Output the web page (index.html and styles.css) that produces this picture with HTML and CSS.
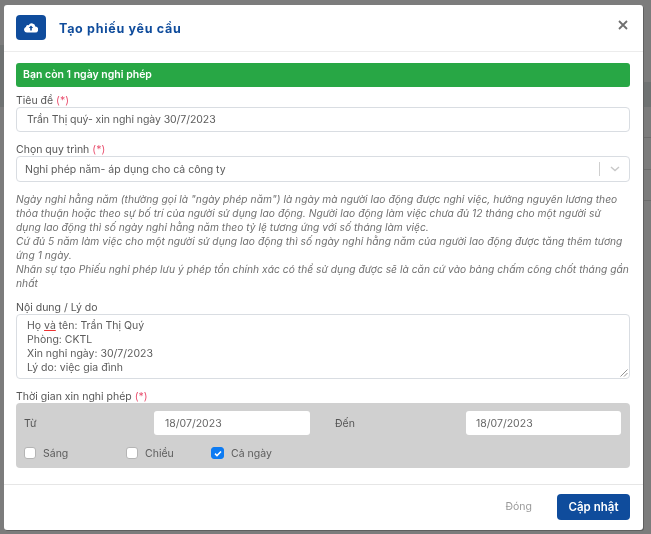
FILE: index.html
```html
<!DOCTYPE html>
<html lang="vi">
<head>
<meta charset="utf-8">
<title>Tạo phiếu yêu cầu</title>
<link rel="stylesheet" href="styles.css">
</head>
<body>
<div class="backdrop">
  <span class="bg-band bg-right-a"></span>
  <span class="bg-line bg-right-b"></span>
  <span class="bg-line bg-right-c"></span>
  <span class="bg-line bg-right-d"></span>
  <span class="bg-band bg-left-a"></span>
  <section class="modal">
    <header class="modal-header">
      <div class="header-icon">
        <svg width="14" height="11" viewBox="0 0 14 11"><path fill="#fff" d="M11.3 4.6A3.5 3.5 0 0 0 4.7 3.2 2.2 2.2 0 0 0 1.9 5 2.9 2.9 0 0 0 3 10.6h8a3 3 0 0 0 .3-6z"/><path fill="#0f4c9c" d="M7 3.6 9.2 6H7.8v2.6H6.2V6H4.8z"/></svg>
      </div>
      <h1 class="modal-title">Tạo phiếu yêu cầu</h1>
      <span class="close">
        <svg width="10" height="10" viewBox="0 0 10 10"><path d="M1 1l8 8M9 1l-8 8" stroke="#6f6f6f" stroke-width="1.8" fill="none"/></svg>
      </span>
    </header>
    <div class="modal-body">
      <div class="alert">Bạn còn 1 ngày nghỉ phép</div>
      <label class="label label-first">Tiêu đề <em>(*)</em></label>
      <div class="field field-title">Trần Thị quý- xin nghỉ ngày 30/7/2023</div>
      <label class="label label-gap">Chọn quy trình <em>(*)</em></label>
      <div class="field field-select">
        <span class="select-value">Nghỉ phép năm- áp dụng cho cả công ty</span>
        <span class="select-sep"></span>
        <span class="select-arrow">
          <svg width="10" height="6" viewBox="0 0 10 6"><path d="M1 1l4 3.6L9 1" stroke="#c8c8c8" stroke-width="1.4" fill="none"/></svg>
        </span>
      </div>
      <p class="help">Ngày nghỉ hằng năm (thường gọi là "ngày phép năm") là ngày mà người lao động được nghỉ việc, hưởng nguyên lương theo<br>thỏa thuận hoặc theo sự bố trí của người sử dụng lao động. Người lao động làm việc chưa đủ 12 tháng cho một người sử<br>dụng lao động thì số ngày nghỉ hằng năm theo tỷ lệ tương ứng với số tháng làm việc.<br>Cứ đủ 5 năm làm việc cho một người sử dụng lao động thì số ngày nghỉ hằng năm của người lao động được tăng thêm tương<br>ứng 1 ngày.<br>Nhân sự tạo Phiếu nghỉ phép lưu ý phép tồn chính xác có thể sử dụng được sẽ là căn cứ vào bảng chấm công chốt tháng gần<br>nhất</p>
      <label class="label label-reason">Nội dung / Lý do</label>
      <div class="field field-area">
        Họ <span class="spell">và</span> tên: Trần Thị Quý<br>Phòng: CKTL<br>Xin nghỉ ngày: 30/7/2023<br>Lý do: việc gia đình
        <svg class="grip" width="8" height="8" viewBox="0 0 8 8"><path d="M7.5 .5l-7 7M7.5 4l-3.5 3.5" stroke="#777" stroke-width=".8" fill="none"/></svg>
      </div>
      <label class="label label-time">Thời gian xin nghỉ phép <em>(*)</em></label>
      <div class="panel">
        <div class="date-row">
          <span class="date-label">Từ</span>
          <span class="date-input date-from">18/07/2023</span>
          <span class="date-label date-label-to">Đến</span>
          <span class="date-input date-to">18/07/2023</span>
        </div>
        <div class="check-row">
          <span class="check check-a"><i class="box"></i>Sáng</span>
          <span class="check check-b"><i class="box"></i>Chiều</span>
          <span class="check"><i class="box box-on"><svg width="8" height="7" viewBox="0 0 8 7"><path d="M1 3.6l2 2 4-4.2" stroke="#fff" stroke-width="1.5" fill="none"/></svg></i>Cả ngày</span>
        </div>
      </div>
    </div>
    <footer class="modal-footer">
      <span class="btn-close">Đóng</span>
      <span class="btn-save">Cập nhật</span>
    </footer>
  </section>
</div>
</body>
</html>
```
FILE: styles.css
```css
* { box-sizing: border-box; }
html, body { margin: 0; height: 100%; }
body { font-family: Inter, "Noto Sans", sans-serif; font-size: 10.5px; color: #555; overflow: hidden; }
.backdrop { position: relative; width: 651px; height: 534px; background: #7c7c7c; padding: 5px 8px 4px 4px; filter: blur(.35px); }
.bg-band { position: absolute; background: #6f7272; }
.bg-line { position: absolute; right: 0; width: 7px; height: 1px; background: #6c6c6c; }
.bg-right-a { right: 0; top: 82px; width: 7px; height: 25px; }
.bg-right-b { top: 137px; }
.bg-right-c { top: 169px; }
.bg-right-d { top: 200px; }
.bg-left-a { left: 0; top: 45px; width: 4px; height: 62px; }
.modal { position: relative; width: 639px; height: 525px; background: #fff; border-radius: 3px; display: flex; flex-direction: column; box-shadow: 1px 1px 0 #5f5f5f; }
.modal-header { height: 47px; flex: none; display: flex; align-items: center; padding: 0 12px; border-bottom: 1px solid #ececec; }
.header-icon { width: 30px; height: 25px; margin-top: -1px; border-radius: 4px; background: #0f4c9c; display: flex; align-items: center; justify-content: center; }
.modal-title { margin: 0 0 0 13px; font-size: 12.5px; font-weight: 700; color: #0f4c9c; letter-spacing: .7px; flex: 1; }
.close { display: flex; margin: -7px 3px 0 0; }
.modal-body { flex: none; padding: 11px 13px 0 12px; }
.alert { height: 24px; background: #28a745; color: #fff; border-radius: 3px; padding: 0 7px; font-size: 10.5px; font-weight: 600; line-height: 24px; }
.label { display: block; height: 13px; line-height: 13px; font-size: 10.5px; color: #555; }
.label em { font-style: normal; color: #e9506f; }
.label-first { margin-top: 7px; }
.label-gap { margin-top: 11px; }
.label-reason { margin-top: 11px; }
.label-time { margin-top: 11px; }
.field { border: 1px solid #d9dde2; border-radius: 4px; background: #fff; font-size: 10.5px; color: #5b5b5b; }
.field-title { height: 25px; line-height: 23px; padding: 0 10px; letter-spacing: -.07px; }
.field-select { height: 26px; display: flex; align-items: center; padding-left: 8px; }
.select-value { flex: 1; }
.select-sep { width: 1px; height: 14px; background: #cfcfcf; }
.select-arrow { width: 29px; display: flex; justify-content: center; }
.help { margin: 10px 0 0; font-size: 10.25px; line-height: 14px; font-style: italic; color: #707070; letter-spacing: .02px; white-space: nowrap; }
.field-area { position: relative; height: 65px; padding: 4px 10px; line-height: 14px; }
.spell { text-decoration: underline #e33 1px; text-underline-offset: 1px; }
.grip { position: absolute; right: 1px; bottom: 1px; }
.panel { height: 65px; background: #d0d0d0; border-radius: 4px; padding: 8px 9px 0 8px; }
.date-row { display: flex; align-items: center; height: 24px; }
.date-label { font-size: 10.5px; width: 130px; color: #555; }
.date-label-to { width: 131px; margin-left: 25px; }
.date-input { width: 156px; height: 24px; background: #fff; border-radius: 3px; padding: 0 11px; line-height: 25px; font-size: 10.5px; color: #666; }
.date-to { width: 155px; padding: 0 10px; }
.check-row { display: flex; align-items: center; height: 16px; margin-top: 10px; }
.check { display: flex; align-items: center; gap: 7px; font-size: 10.5px; color: #5c5c5c; }
.check-a { width: 102px; }
.check-b { width: 85px; }
.box { width: 12px; height: 12px; border: 1px solid #b5b5b5; border-radius: 3px; background: #fff; display: flex; align-items: center; justify-content: center; }
.box-on { width: 13px; background: #0d7bf2; border-color: #0d7bf2; }
.modal-footer { position: absolute; left: 0; right: 0; bottom: 0; height: 46px; border-top: 1px solid #e6e6e6; display: flex; align-items: center; justify-content: flex-end; padding: 0 13px 2px 0; }
.btn-close { font-size: 10.5px; color: #9a9a9a; margin-right: 25px; }
.btn-save { width: 73px; height: 26px; background: #0f4c9c; color: #fff; border-radius: 4px; display: flex; align-items: center; justify-content: center; font-size: 11.5px; font-weight: 600; }
```
